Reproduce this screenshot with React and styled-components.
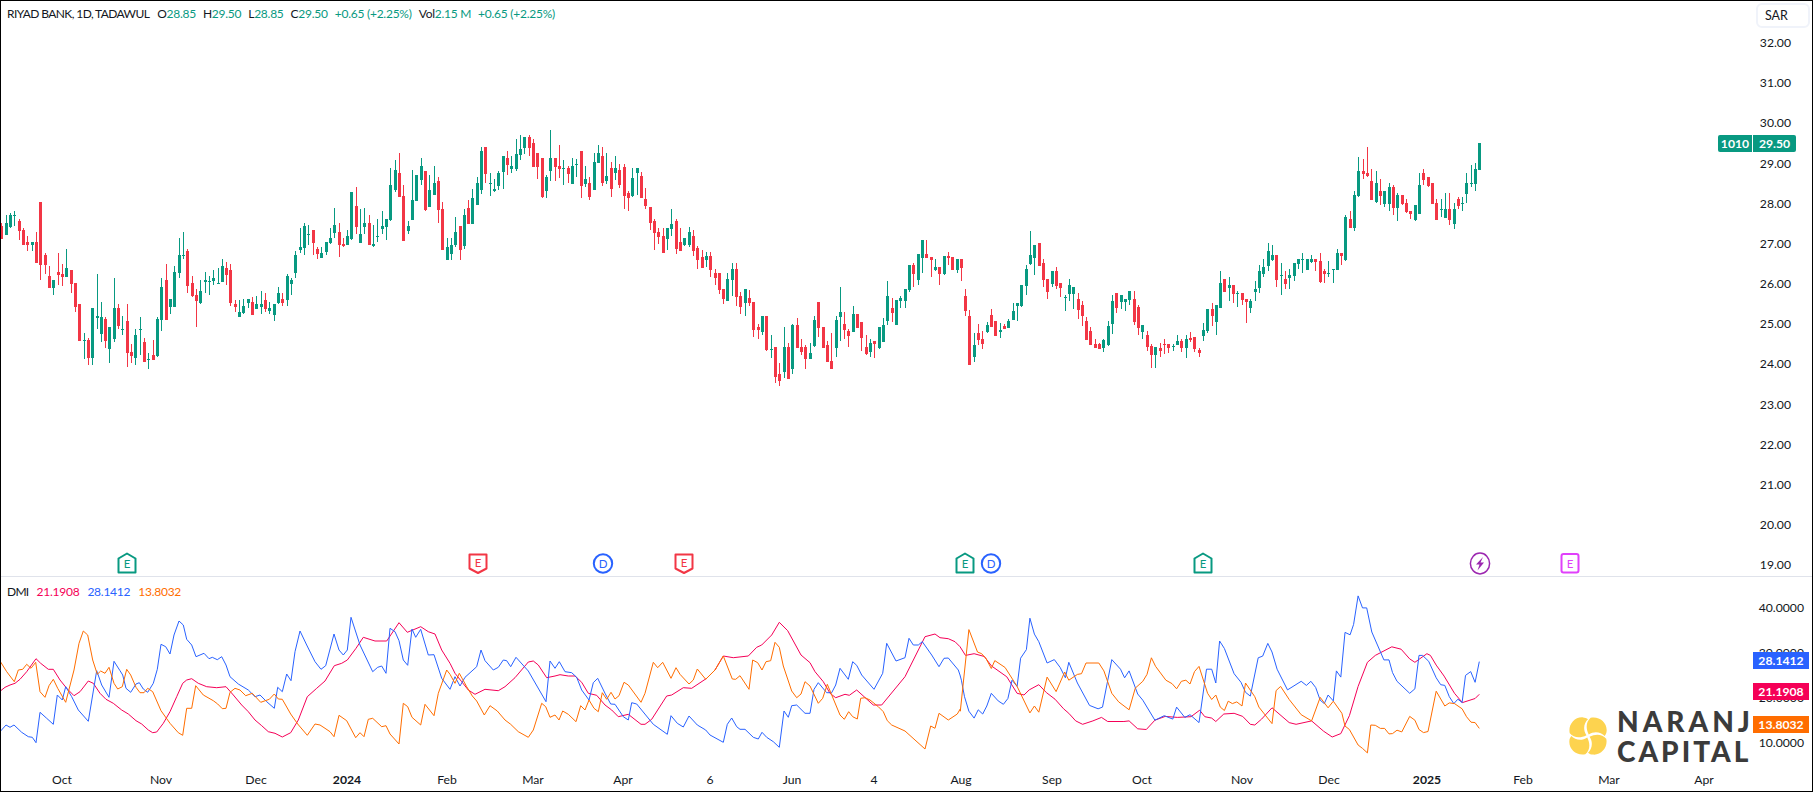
import React from "react";
import styled, { createGlobalStyle } from "styled-components";

const UP = "#089981";
const DOWN = "#f23645";
const INK = "#131722";
const FONT = `Lato, "Open Sans", "Liberation Sans", sans-serif`;

/* Candle tables: colour, x, body top, body bottom, wick top, wick bottom — read at 3x from the chart. */
const CANDLE_SEGMENTS = [
  { x0: 0, y0: 190, rows: "r 5 108 147 99 147;g 19 99 135 75 135;g 31 75 111 69 114;g 43 75 78 63 108;r 58 93 123 87 150;r 70 120 165 114 165;r 82 156 165 138 183;g 97 156 165 156 183;r 109 156 219 126 219;r 121 36 225 36 270;r 136 195 225 189 252;r 148 258 294 228 294;g 160 270 294 270 315;r 175 246 255 189 285;r 187 252 261 222 288;g 199 234 261 177 261;r 214 240 282 240 309;r 226 279 351 279 366;r 238 342 453 342 453;g 253 450 453 429 507;r 265 450 504 444 525;g 277 354 504 354 525;g 292 378 384 252 417;g 304 381 432 336 456;r 316 387 453 381 474;g 328 411 477 411 519;g 343 354 447 264 456;r 355 354 408 342 417;g 367 417 420 378 435;r 382 393 489 342 531;r 394 486 498 462 519;g 406 435 504 417 525;g 421 417 420 381 495;r 433 456 516 444 516;g 445 507 510 489 537;r 460 495 510 450 510;g 472 387 498 381 501;g 484 291 390 264 423;r 499 270 390 222 390;g 511 327 351 327 372;g 523 246 351 228 351;g 538 195 249 144 264;g 550 195 198 126 207;r 562 183 288 177 309;r 577 279 318 258 321;r 589 315 333 297 411;g 601 303 339 270 342;g 616 270 276 246 309;g 628 273 276 258 315;g 640 264 273 240 285;g 655 279 282 234 282;g 667 228 276 207 276;r 679 234 255 216 285;r 691 240 339 222 348;r 706 342 351 330 366;g 718 366 381 330 381;g 730 348 369 327 372;g 745 327 339 327 354;r 757 336 375 321 375;g 769 342 357 318 357;g 784 342 351 303 372;r 796 330 357 309 366;g 808 354 363 336 372;g 823 342 375 342 393;g 835 309 339 291 342;r 847 327 339 309 348;g 862 258 330 252 348;g 874 270 282 264 315;g 886 195 249 183 264" },
  { x0: 290, y0: 125, rows: "g 31 366 375 309 384;g 43 303 369 294 390;g 55 327 330 300 360;r 70 315 354 315 390;r 82 372 387 366 402;g 94 384 399 366 399;g 109 351 381 351 390;g 121 339 354 309 357;g 133 300 324 249 339;r 148 321 360 294 396;r 160 357 363 339 366;g 172 333 360 315 360;g 184 201 342 201 345;r 199 243 306 186 327;g 211 327 354 252 354;g 223 294 306 249 327;r 238 294 360 270 360;g 250 357 363 300 366;g 262 333 336 282 351;g 277 303 312 258 327;g 289 282 306 282 345;g 301 180 285 129 288;g 316 135 195 105 201;r 328 144 216 84 216;r 340 213 348 180 348;g 355 303 318 288 327;g 367 225 285 135 285;g 379 150 228 150 228;g 394 123 165 99 180;r 406 138 255 138 258;g 418 195 246 150 246;g 433 174 210 123 210;r 445 168 255 156 294;r 457 252 375 231 375;g 472 366 405 339 405;g 484 360 387 339 405;g 496 321 360 276 366;r 511 303 375 303 405;g 523 270 363 252 372;r 535 249 297 225 297;g 547 219 297 192 297;g 562 174 240 156 240;g 574 78 195 66 207;r 586 66 147 66 174;g 601 174 177 144 213;g 613 192 198 162 201;g 625 144 183 138 195;g 640 93 141 93 192;r 652 99 120 78 150;g 664 123 132 93 144;g 679 87 132 42 138;g 691 72 90 30 105;g 703 36 69 36 87;r 718 36 69 30 93;r 730 54 126 42 126;r 742 84 126 84 162;r 757 99 216 99 219;g 769 156 198 150 219;g 781 99 138 15 168;r 796 99 126 99 168;r 808 123 132 60 159;g 820 129 132 105 180;r 835 129 147 123 174;g 847 123 177 99 177;g 859 117 120 102 156;r 874 78 183 78 219;g 886 162 177 123 186;r 898 174 216 156 225;g 913 111 195 84 195;g 925 84 114 60 114;r 937 93 174 66 183;g 949 153 168 84 177;r 964 129 192 111 216;g 976 129 144 93 165;r 988 135 180 117 189;r 1003 126 213 117 252;r 1015 204 219 198 258;g 1027 159 213 129 216;g 1042 129 144 129 210;r 1054 153 219 141 219;r 1066 222 243 189 252;r 1081 246 294 246 315;r 1093 288 324 282 375;r 1105 321 336 309 357;r 1120 333 384 309 384;g 1132 309 342 309 375;g 1144 297 312 252 333;r 1159 288 372 282 387;r 1171 351 378 309 378;g 1183 339 360 339 363;g 1198 321 360 306 366" },
  { x0: 680, y0: 200, rows: "r 40 108 153 90 168;r 52 144 180 138 207;r 67 171 204 150 204;g 79 168 180 156 201;r 91 168 210 156 231;r 106 219 234 207 255;r 118 219 270 219 282;r 130 267 297 267 312;g 142 237 303 219 303;g 157 207 240 189 288;r 169 207 291 189 318;r 181 288 321 276 342;g 196 267 309 267 348;r 208 294 309 270 318;r 220 306 390 306 411;r 235 381 390 372 417;g 247 348 396 348 405;r 259 348 450 348 453;g 274 447 450 405 474;r 286 441 531 441 549;r 298 522 543 489 558;g 313 441 516 381 534;r 325 441 537 429 537;g 337 375 507 372 522;r 352 375 444 354 444;r 364 441 456 417 465;r 376 441 477 435 507;g 391 459 477 429 477;g 403 360 438 348 441;r 415 306 384 306 411;r 430 381 444 381 444;r 442 435 486 423 486;r 454 483 507 399 507;g 469 360 444 348 471;g 481 336 351 261 423;r 493 372 390 336 417;r 505 393 408 387 441;g 520 342 396 318 396;r 532 342 384 342 384;r 544 366 414 366 453;r 559 441 462 405 465;g 571 429 456 417 471;r 583 423 432 423 474;g 598 381 444 381 447;g 610 375 426 354 426;g 622 288 363 243 375;r 637 324 339 294 366;g 649 300 375 300 375;g 661 294 303 288 324;g 676 267 303 267 324;g 688 195 270 195 276;r 700 195 222 189 261;g 715 162 240 162 255;g 727 120 174 120 219;r 739 162 174 120 174;r 754 171 180 171 231;g 766 201 210 177 213;r 778 201 222 201 255;g 793 168 222 168 225;r 805 168 174 156 195;r 817 171 210 171 210;g 832 177 210 177 219;r 844 177 204 177 243;r 856 288 333 267 348;r 868 348 495 330 495;g 883 435 471 399 486;r 895 399 420 372 435;r 907 417 432 393 447;g 922 375 396 366 399;r 934 345 381 327 381;r 946 363 408 363 408;g 961 390 396 369 414;r 973 378 387 372 387;g 985 363 384 357 384;g 1000 333 360 309 360;g 1012 309 318 309 363;g 1024 255 318 255 321;g 1039 207 258 195 285;g 1051 165 192 93 195;g 1063 135 174 135 225;r 1078 129 198 129 198;r 1090 189 240 177 261;r 1102 237 276 237 297;g 1117 213 252 213 261;r 1129 213 258 201 267;r 1141 249 264 249 291;g 1156 291 294 285 333;g 1168 255 282 237 303;g 1180 261 282 261 327;r 1195 297 330 279 357" },
  { x0: 1070, y0: 130, rows: "r 37 525 558 513 588;r 49 573 630 561 630;r 61 603 645 591 645;r 76 642 654 627 654;r 88 642 657 639 657;g 100 630 654 627 666;g 115 588 645 573 648;g 127 513 582 495 612;r 139 489 534 489 549;g 154 495 516 495 537;g 166 507 516 507 543;g 178 483 510 483 525;r 193 507 576 483 585;r 205 531 594 525 615;g 217 585 606 585 627;r 232 615 651 603 663;r 244 648 675 642 714;g 256 651 675 651 714;r 271 654 663 639 681;r 283 642 645 627 672;r 295 642 654 642 669;g 310 648 651 642 663;g 322 633 645 615 645;r 334 633 654 627 666;g 349 627 654 615 684;r 361 624 630 606 636;r 373 621 657 621 666;r 388 660 669 654 681;g 400 600 618 579 633;g 412 537 603 537 609;r 427 537 558 519 588;g 439 525 576 525 615;g 451 459 534 423 534;r 463 447 486 447 486;g 478 465 474 441 513;r 490 465 492 465 519;g 502 489 492 483 531;r 517 489 510 489 525;r 529 507 516 507 579;g 541 513 534 507 549;g 556 477 486 453 513;g 568 423 474 405 489;g 580 411 432 387 441;g 595 363 408 339 423;g 607 375 390 345 393;r 619 375 450 375 471;g 634 435 438 399 495;r 646 447 462 423 477;g 658 435 444 417 477;g 673 399 438 399 453;g 685 387 402 387 417;g 697 387 390 369 429;g 712 387 420 387 420;g 724 387 396 375 399;r 736 387 396 387 423;r 751 393 456 369 459;r 763 423 432 417 459;g 775 429 432 393 441;g 790 417 420 417 459;g 802 369 420 357 420;r 814 369 378 369 405;g 826 261 390 255 393;r 841 267 294 243 294;g 853 195 294 183 303;g 865 123 198 81 201;r 880 123 132 87 147;r 892 129 138 51 141;r 904 153 210 117 210;g 919 159 216 123 219;r 931 183 198 147 225;g 943 183 222 183 231;g 958 171 222 159 243;r 970 171 234 165 255;g 982 195 234 189 273;r 997 195 222 195 225;r 1009 219 246 207 249;r 1021 243 252 243 267;g 1036 225 270 225 273;g 1048 165 252 129 252;r 1060 129 150 117 165;r 1075 141 168 141 171;r 1087 159 222 159 222;r 1099 219 270 207 270;g 1114 237 240 207 261;g 1126 237 264 189 264;r 1138 237 270 189 285;g 1153 237 282 219 297;r 1165 207 228 201 237;g 1177 219 222 201 243;g 1189 159 192 129 219;g 1204 159 162 105 171;g 1216 117 162 99 183;g 1228 39 120 39 120" },
];

const candles = CANDLE_SEGMENTS.flatMap(({ x0, y0, rows }) =>
  rows.split(";").map((row) => {
    const [c, ...n] = row.split(" ");
    const [x, top, bot, wt, wb] = n.map(Number);
    const sy = (v) => Math.round(y0 + v / 3);
    return { up: c === "g", x: Math.floor(x0 + x / 3), top: sy(top), bot: sy(bot), wt: sy(wt), wb: sy(wb) };
  })
);

/* DMI lines: three crops; each list is x,y pairs in crop units, with the crop's scale. */
const DMI_SOURCES = {
  adx: [
    [0, 580, 3, [0,334,15,322,30,315,45,310,60,298,80,275,108,236,122,250,145,268,160,268,180,300,200,325,222,347,240,335,265,303,280,310,300,340,318,358,340,370,365,390,385,402,408,422,425,432,445,450,458,458,470,456,490,430,510,395,530,350,548,310,560,300,575,296,595,310,620,320,650,323,678,320,700,345,725,375,745,395,765,420,785,437,805,455,825,460,847,471,872,458,895,420,922,350,950,325,975,303,1003,257,1025,250,1042,240,1068,205,1090,172,1125,183,1160,183,1197,128,1222,157,1262,140,1285,155,1305,162,1325,210,1350,250]],
    [440, 590, 3, [45,250,65,275,85,300,105,313,135,298,175,302,195,290,225,263,265,216,280,213,295,225,320,263,345,258,360,254,385,258,405,258,425,277,445,310,470,316,495,345,515,360,535,380,565,373,603,403,615,403,635,388,680,318,695,315,730,293,755,295,800,265,825,240,850,198,880,203,925,198,950,172,965,165,995,135,1018,97,1043,122,1083,195,1110,218,1125,245,1150,275,1170,310,1187,323,1215,313,1228,316,1250,300,1300,345,1325,345,1395,260,1455,140,1485,132,1500,143,1525,146,1545,155,1560,170]],
    [950, 590, 2.904, [45,190,70,185,100,193,120,220,165,252,195,300,215,305,230,290,258,275,280,298,305,317,330,345,345,358,365,380,385,390,415,380,440,370,458,382,505,382,520,380,545,403,570,405,595,378,625,367,660,370,700,368,725,349,740,368,760,372,772,382,795,360,825,358,850,367,872,390,885,392,905,375,935,342,985,385,1005,390,1050,380,1085,410,1110,427,1135,417,1160,365,1185,280,1212,210,1235,190,1283,165,1310,172,1335,200,1350,210,1385,185,1395,190,1412,218,1435,250,1465,300,1488,327,1525,315,1537,303]],
  ],
  plus: [
    [0, 580, 3, [0,455,18,435,30,442,42,435,65,457,85,470,97,472,108,488,120,397,140,415,160,433,172,345,187,360,197,320,215,350,235,390,265,424,290,272,305,315,327,352,342,244,360,272,368,285,378,325,392,337,408,312,418,308,430,327,443,337,460,310,472,268,483,193,497,200,510,222,522,165,537,123,550,135,560,178,575,195,588,230,612,220,627,236,637,232,652,239,665,230,678,255,690,290,715,312,745,330,765,350,780,345,800,365,823,385,833,322,847,335,860,282,873,302,885,215,900,153,920,195,945,245,963,268,977,257,1002,162,1017,210,1030,225,1042,210,1053,112,1080,195,1118,275,1133,262,1145,258,1158,280,1170,145,1185,155,1197,182,1210,240,1223,256,1236,147,1247,172,1262,148,1285,225,1302,224,1325,295,1350,328]],
    [440, 590, 3, [45,260,60,288,75,262,110,230,123,180,135,212,160,240,175,232,190,210,200,212,212,230,228,202,265,243,318,335,330,213,345,235,358,215,375,245,395,248,410,262,425,300,447,330,460,278,473,265,495,310,512,342,525,343,550,380,565,390,575,338,590,342,640,403,682,433,693,377,712,400,730,411,747,378,772,405,797,420,810,435,850,457,862,403,875,384,890,410,900,418,915,418,940,442,955,447,966,427,980,442,1000,455,1018,472,1032,363,1045,382,1055,347,1070,345,1095,370,1110,370,1122,298,1135,278,1160,308,1175,308,1187,285,1200,235,1225,268,1238,215,1250,226,1265,255,1302,298,1328,250,1340,160,1368,213,1395,203,1407,145,1420,165,1435,165,1447,155,1475,195,1497,230,1512,205,1525,204,1555,240,1560,255]],
    [950, 590, 2.904, [33,262,42,310,55,352,70,372,82,348,95,360,107,337,120,300,140,322,155,332,168,315,180,262,195,280,205,198,222,173,232,82,245,128,258,150,282,212,303,202,320,225,335,255,345,210,370,270,405,335,430,345,443,340,470,202,495,230,507,255,520,235,545,302,560,320,595,378,622,365,647,375,658,340,682,370,697,362,723,385,745,230,760,230,772,270,783,148,797,170,825,243,845,268,858,297,872,308,895,197,908,192,923,155,935,180,950,230,980,290,1020,265,1035,277,1048,265,1062,283,1075,320,1087,330,1098,305,1113,322,1122,235,1135,253,1147,123,1162,130,1172,100,1185,17,1198,52,1210,52,1225,122,1260,203,1275,203,1285,240,1298,265,1335,300,1350,287,1362,190,1372,190,1390,207,1412,255,1425,275,1437,277,1450,310,1463,330,1475,317,1487,327,1497,248,1512,237,1525,268,1537,208]],
  ],
  minus: [
    [0, 580, 3, [0,243,20,275,43,305,55,270,68,268,80,253,93,265,107,247,120,335,135,352,147,317,160,298,173,325,197,367,222,270,237,190,250,153,263,165,278,240,292,283,302,273,315,280,327,262,342,310,353,327,367,320,380,268,392,285,408,322,420,338,432,338,443,325,458,335,483,392,510,430,535,458,548,466,560,385,575,385,587,317,610,345,640,362,653,372,667,386,678,385,690,337,705,325,720,330,737,347,757,340,782,367,808,358,823,342,835,357,847,358,872,402,893,432,922,466,945,432,960,435,975,445,990,455,1002,470,1017,406,1040,422,1067,473,1080,458,1092,470,1105,418,1118,415,1145,440,1158,437,1170,462,1197,492,1210,370,1223,380,1236,412,1262,435,1275,373,1302,407,1315,340,1340,270,1350,283]],
    [440, 590, 3, [45,280,58,250,80,290,97,318,110,333,133,375,150,347,172,363,195,390,212,403,235,425,265,442,280,420,305,340,317,350,330,382,345,375,357,390,368,363,385,373,408,395,422,347,435,360,447,330,462,355,475,365,487,308,500,328,513,307,525,327,537,317,552,277,565,285,603,337,615,310,640,217,653,233,668,217,693,265,708,233,720,253,747,282,760,270,772,237,797,268,825,240,850,198,877,267,887,268,900,257,927,298,938,210,953,218,966,240,978,215,992,212,1005,157,1018,172,1030,228,1055,303,1070,323,1083,312,1095,275,1110,288,1135,340,1148,325,1162,283,1200,375,1213,388,1226,365,1238,380,1252,387,1262,325,1275,323,1290,330,1315,350,1330,365,1342,392,1355,405,1395,423,1455,477,1472,408,1485,415,1497,370,1525,390,1552,372,1560,358]],
    [950, 590, 2.904, [30,352,55,115,80,180,92,185,105,200,120,228,130,205,160,225,195,280,232,357,245,337,258,355,282,253,308,295,333,238,345,262,370,245,382,243,395,212,432,212,447,235,470,300,490,325,520,348,538,285,560,265,572,245,585,197,597,222,627,262,645,272,658,287,672,265,685,262,697,273,710,237,723,222,748,300,760,318,772,305,785,340,797,350,808,323,820,330,833,325,848,337,858,270,885,310,897,340,935,388,947,292,960,280,985,318,1020,362,1050,380,1075,312,1098,342,1113,323,1138,358,1147,395,1160,405,1185,450,1198,460,1212,473,1222,392,1235,393,1250,402,1262,402,1275,418,1285,417,1298,407,1312,412,1335,367,1350,378,1362,405,1375,414,1388,411,1412,294,1437,337,1450,328,1465,330,1487,345,1500,368,1513,384,1525,385,1537,402]],
  ],
};

const toPolyline = (segments) =>
  segments
    .flatMap(([x0, y0, k, pts]) => {
      const out = [];
      for (let i = 0; i < pts.length; i += 2) out.push(`${(x0 + pts[i] / k).toFixed(1)},${(y0 + pts[i + 1] / k).toFixed(1)}`);
      return out;
    })
    .join(" ");

const PRICE_TICKS = ["32.00","31.00","30.00","29.00","28.00","27.00","26.00","25.00","24.00","23.00","22.00","21.00","20.00","19.00"];
const DMI_TICKS = ["40.0000","30.0000","20.0000","10.0000"];
const TIME_LABELS = [
  ["Oct",62],["Nov",161],["Dec",256],["2024",347,true],["Feb",447],["Mar",533],["Apr",623],["6",710],["Jun",792],["4",874],
  ["Aug",961],["Sep",1052],["Oct",1142],["Nov",1242],["Dec",1329],["2025",1427,true],["Feb",1523],["Mar",1609],["Apr",1704],
];

const Global = createGlobalStyle`
  html, body { margin: 0; padding: 0; background: #fff; }
  body { font-family: ${FONT}; color: ${INK}; }
`;

const Frame = styled.div`
  box-sizing: border-box;
  width: 1813px;
  height: 792px;
  border: 1px solid #000;
  display: flex;
  flex-direction: column;
  overflow: hidden;
  background: #fff;
`;
const Pane = styled.section`
  position: relative;
  flex: 0 0 ${(p) => p.$h}px;
  min-height: 0;
  box-sizing: content-box;
  display: flex;
  border-bottom: ${(p) => (p.$rule ? "1px solid #e0e3eb" : "none")};
`;
const Plot = styled.svg`
  flex: 0 0 1752px;
  height: ${(p) => p.$h}px;
  display: block;
`;
const Axis = styled.div`
  flex: 1;
  height: ${(p) => p.$h}px;
  display: flex;
  flex-direction: column;
  padding-top: ${(p) => p.$pad}px;
  box-sizing: border-box;
`;
const Tick = styled.div`
  flex: 0 0 ${(p) => p.$h}px;
  display: flex;
  align-items: center;
  justify-content: flex-end;
  padding-right: ${(p) => p.$right}px;
  font-size: 12.2px;
  color: ${INK};
`;
const Legend = styled.div`
  position: absolute;
  left: 6px;
  top: ${(p) => p.$top}px;
  display: flex;
  align-items: center;
  font-size: 12px;
  line-height: 16px;
  white-space: nowrap;
`;
const Title = styled.span`
  margin-right: 8px;
  letter-spacing: ${(p) => p.$spacing || 0}px;
`;
const Key = styled.span`
  margin-left: ${(p) => (p.$first ? 0 : 7)}px;
  letter-spacing: -0.3px;
`;
const Val = styled.span`
  color: ${(p) => p.$c || UP};
  margin-left: ${(p) => p.$gap || 0}px;
  letter-spacing: -0.25px;
`;
const CurrencyBox = styled.div`
  position: absolute;
  right: 2px;
  top: 2px;
  box-sizing: border-box;
  width: 54px;
  height: 25px;
  border: 2px solid #f0f3fa;
  border-radius: 6px;
  display: flex;
  align-items: center;
  padding-left: 7px;
  font-size: 12.5px;
  color: ${INK};
  background: #fff;
`;
const Tag = styled.div`
  position: absolute;
  left: ${(p) => p.$left}px;
  top: ${(p) => p.$top}px;
  width: ${(p) => p.$w}px;
  height: 17px;
  background: ${(p) => p.$c};
  border-radius: ${(p) => p.$radius || "2px"};
  color: #fff;
  font-size: 12.2px;
  font-weight: 700;
  line-height: 17px;
  text-align: center;
`;
const TimeAxis = styled.div`
  position: relative;
  flex: 1;
`;
const TimeLabel = styled.span`
  position: absolute;
  top: 6px;
  transform: translateX(-50%);
  font-size: 12.2px;
  line-height: 18px;
  font-weight: ${(p) => (p.$bold ? 700 : 400)};
  color: ${INK};
`;
const Watermark = styled.div`
  position: absolute;
  left: 1568px;
  top: 129px;
  display: flex;
  align-items: center;
  gap: 10px;
`;
const Brand = styled.div`
  display: flex;
  flex-direction: column;
`;
const BrandLine = styled.div`
  font-weight: 900;
  font-size: 28px;
  line-height: 30px;
  letter-spacing: ${(p) => p.$spacing}px;
  color: #3b3b3b;
`;
const MarkGlyph = styled.text`
  font-family: ${FONT};
  font-size: 11.5px;
  text-anchor: middle;
  fill: ${(p) => p.$c};
`;

const Candle = ({ up, x, top, bot, wt, wb }) => {
  const c = up ? UP : DOWN;
  return (
    <g fill={c} shapeRendering="crispEdges">
      <rect x={x} y={wt} width={1} height={Math.max(1, wb - wt)} />
      <rect x={x - 1} y={top} width={3} height={Math.max(1, bot - top)} />
    </g>
  );
};

const Marker = ({ kind, x }) => {
  const s = { fill: "#fff", strokeWidth: 2, strokeLinejoin: "round" };
  if (kind === "up")
    return (
      <g>
        <path {...s} stroke={UP} d={`M${x} 553.5 L${x + 8.5} 558.5 V572.5 H${x - 8.5} V558.5 Z`} />
        <MarkGlyph $c={UP} x={x} y={568}>E</MarkGlyph>
      </g>
    );
  if (kind === "down")
    return (
      <g>
        <path {...s} stroke={DOWN} d={`M${x - 8.5} 554.5 H${x + 8.5} V568.5 L${x} 573 L${x - 8.5} 568.5 Z`} />
        <MarkGlyph $c={DOWN} x={x} y={567}>E</MarkGlyph>
      </g>
    );
  if (kind === "div")
    return (
      <g>
        <circle {...s} stroke="#2962ff" cx={x} cy={563.5} r={9.2} />
        <MarkGlyph $c="#2962ff" x={x} y={567.5}>D</MarkGlyph>
      </g>
    );
  if (kind === "future")
    return (
      <g>
        <rect {...s} stroke="#e040fb" x={x - 8.5} y={554} width={17} height={18.5} rx={2} />
        <MarkGlyph $c="#e040fb" x={x} y={568}>E</MarkGlyph>
      </g>
    );
  return (
    <g>
      <ellipse {...s} strokeWidth={1.5} stroke="#9c27b0" cx={x} cy={563.5} rx={9.6} ry={10.4} />
      <path fill="#9c27b0" d={`M${x + 3} 557 L${x - 4} 564.5 H${x - 0.5} L${x - 2.5} 570.5 L${x + 4} 562.5 H${x + 0.5} Z`} />
    </g>
  );
};

const PETAL = "M52 46 C44 31 44 13 57 2 C79 -3 101 14 99 37 C99 42 97 46 94 50 C84 39 66 36 52 46 Z";

const LogoMark = () => (
  <svg width="38" height="38" viewBox="0 0 100 100">
    {[0, 90, 180, 270].map((a) => (
      <path key={a} d={PETAL} fill="#fdd34f" transform={`rotate(${a} 50 50)`} />
    ))}
  </svg>
);

const MARKERS = [
  ["up", 127], ["down", 478], ["div", 603], ["down", 684], ["up", 965], ["div", 991], ["up", 1203], ["bolt", 1480], ["future", 1570],
];

export default function App() {
  return (
    <>
      <Global />
      <Frame>
        <Pane $h={575} $rule>
          <Plot $h={575} viewBox="1 1 1752 575">
            {candles.map((c, i) => <Candle key={i} {...c} />)}
            {MARKERS.map(([k, x], i) => <Marker key={i} kind={k} x={x} />)}
          </Plot>
          <Axis $h={575} $pad={21.4}>
            {PRICE_TICKS.map((t) => <Tick key={t} $h={40.2} $right={21}>{t}</Tick>)}
          </Axis>
          <Legend $top={5}>
            <Title $spacing={-0.6}>RIYAD BANK, 1D, TADAWUL</Title>
            <Key $first>O</Key><Val>28.85</Val>
            <Key>H</Key><Val>29.50</Val>
            <Key>L</Key><Val>28.85</Val>
            <Key>C</Key><Val>29.50</Val>
            <Val $gap={7}>+0.65 (+2.25%)</Val>
            <Key>Vol</Key><Val>2.15 M</Val>
            <Val $gap={7}>+0.65 (+2.25%)</Val>
          </Legend>
          <CurrencyBox>SAR</CurrencyBox>
          <Tag $c={UP} $left={1717} $top={134} $w={34} $radius="2px 0 0 2px">1010</Tag>
          <Tag $c={UP} $left={1752} $top={134} $w={43} $radius="0 2px 2px 0">29.50</Tag>
        </Pane>
        <Pane $h={188}>
          <Plot $h={188} viewBox="1 577 1752 188">
            <polyline points={toPolyline(DMI_SOURCES.adx)} fill="none" stroke="#f50057" strokeWidth="1" strokeLinejoin="round" />
            <polyline points={toPolyline(DMI_SOURCES.plus)} fill="none" stroke="#2962ff" strokeWidth="1" strokeLinejoin="round" />
            <polyline points={toPolyline(DMI_SOURCES.minus)} fill="none" stroke="#ff6d00" strokeWidth="1" strokeLinejoin="round" />
          </Plot>
          <Axis $h={188} $pad={7.5}>
            {DMI_TICKS.map((t) => <Tick key={t} $h={45} $right={8}>{t}</Tick>)}
          </Axis>
          <Legend $top={7}>
            <Title $spacing={-0.7}>DMI</Title>
            <Val $c="#f50057">21.1908</Val>
            <Val $c="#2962ff" $gap={8}>28.1412</Val>
            <Val $c="#ff6d00" $gap={8}>13.8032</Val>
          </Legend>
          <Tag $c="#2962ff" $left={1752} $top={75} $w={56} $radius="0">28.1412</Tag>
          <Tag $c="#f50057" $left={1752} $top={106} $w={56} $radius="0">21.1908</Tag>
          <Tag $c="#ff6d00" $left={1752} $top={139} $w={56} $radius="0">13.8032</Tag>
          <Watermark>
            <LogoMark />
            <Brand>
              <BrandLine $spacing={4}>NARANJ</BrandLine>
              <BrandLine $spacing={3}>CAPITAL</BrandLine>
            </Brand>
          </Watermark>
        </Pane>
        <TimeAxis>
          {TIME_LABELS.map(([t, x, bold], i) => (
            <TimeLabel key={i} $bold={bold} style={{ left: x - 1 }}>{t}</TimeLabel>
          ))}
        </TimeAxis>
      </Frame>
    </>
  );
}
